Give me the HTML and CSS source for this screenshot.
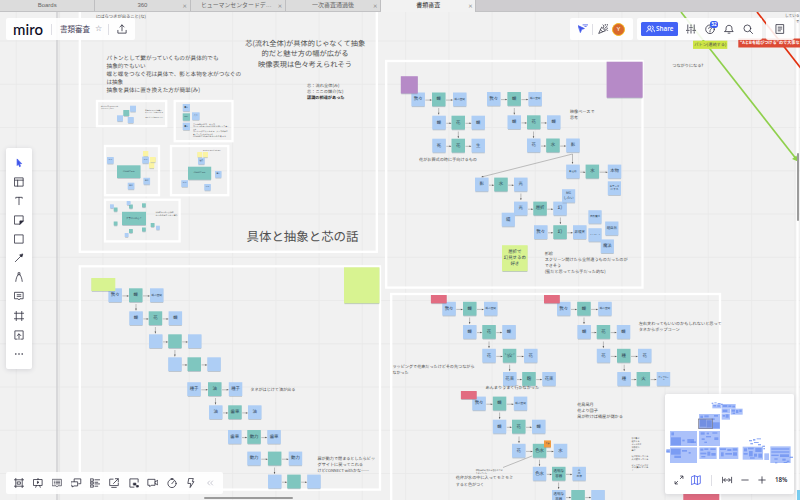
FILE: index.html
```html
<!DOCTYPE html>
<html lang="ja">
<head>
<meta charset="utf-8">
<title>書類審査</title>
<link rel="stylesheet" href="styles.css">
</head>
<body>
<div class="app">
  <nav class="tabs">
    <div class="tab">Boards</div>
    <div class="tab">360<span class="close">×</span></div>
    <div class="tab tab-long">ヒューマンセンタードデ…<span class="close">×</span></div>
    <div class="tab">一次審査通過後<span class="close">×</span></div>
    <div class="tab tab-active">書類審査<span class="close">×</span></div>
    <div class="tab-rest"></div>
  </nav>
  <main class="stage">
    <svg class="board" id="board" viewBox="0 12 800 488"></svg>

    <header class="panel panel-board">
      <span class="logo">miro</span>
      <i class="rule"></i>
      <span class="board-name">書類審査</span>
      <span class="star">☆</span>
      <i class="rule"></i>
      <svg class="icon upload" viewBox="0 0 12 12"><path d="M6 8V1.600M3.700 3.800 6 1.500l2.300 2.300M1.500 7.500v3h9v-3"/></svg>
    </header>

    <div class="panel panel-user">
      <svg class="icon cursor-name" viewBox="0 0 12 12"><path class="solid" d="M1 2.500l6.500 3-3 .9L3.300 9.500z"/><path d="M6 1.500h5M8 3.200h1.500"/></svg>
      <i class="rule"></i>
      <svg class="icon" viewBox="0 0 12 12"><path d="M1.500 10.500 4.500 4l3.700 3.600zM3.500 7l2 2M6.500 4.500C7.500 3.500 7 2 6 1.500M7.800 5.500 10.500 3M8.500 7c1-.5 2-.2 2.500.5M8.500 1v1M10.700 1v.6M10.600 5v.6"/></svg>
      <span class="avatar">Y</span>
    </div>

    <div class="panel panel-actions">
      <button class="share"><svg viewBox="0 0 12 10"><path d="M1 9C1 6.800 2.300 6 4.200 6s3.300.8 3.300 3M4.200 1.200a1.900 1.900 0 1 1 0 3.900 1.900 1.900 0 0 1 0-3.900M7.300 1.200a1.900 1.900 0 1 1 0 3.900M8.500 6c1.700 0 2.700 1 2.700 3"/></svg>Share</button>
      <svg class="icon" viewBox="0 0 12 12"><path d="M2.500 1.500v5M2.500 9v1.500M1 7.500h3M6 1.500V3M6 6v4.500M4.600 4.500h2.800M9.500 1.500v5M9.500 9v1.500M8 7.500h3"/></svg>
      <span class="help"><svg class="icon" viewBox="0 0 12 12"><circle cx="6" cy="6.300" r="4.700"/><path d="M4.500 5.300c0-2 3-1.800 3 0 0 1-1.500 1.100-1.500 2.200M6 8.600v.7"/></svg><b class="count">52</b></span>
      <svg class="icon" viewBox="0 0 12 12"><path d="M1.500 8.800h9L9.200 7V5C9.200 1 2.800 1 2.800 5v2zM5 10.500h2"/></svg>
      <svg class="icon" viewBox="0 0 12 12"><circle cx="5.300" cy="5.300" r="3.700"/><path d="m8 8 3 3"/></svg>
    </div>

    <div class="panel panel-notes">
      <svg class="icon" viewBox="0 0 12 12"><path d="M2 1.200h8v9.600H2zM4 4h4M4 6h4M4 8h2.500"/></svg>
    </div>

    <aside class="panel tools">
      <svg class="icon blue" viewBox="0 0 12 12"><path class="solid" d="M4 2v6.700l1.500-1.500 1.100 2.800 1-.5-1.100-2.600 2-.2z"/></svg>
      <svg class="icon" viewBox="0 0 12 12"><path d="M1.500 1.500h9v9h-9zM1.500 4h9M4.500 4v6.500"/></svg>
      <svg class="icon" viewBox="0 0 12 12"><path d="M2.500 3V2h7v1M6 2v8"/></svg>
      <svg class="icon" viewBox="0 0 12 12"><path d="M1.500 1.500h9v5.500l-3.500 3.500H1.500z"/><path class="solid" d="M10.500 7H7v3.500z"/></svg>
      <svg class="icon" viewBox="0 0 12 12"><path d="M1.500 1.500h9v9h-9z"/></svg>
      <svg class="icon" viewBox="0 0 12 12"><path d="M2 10 9 3"/><path class="solid" d="m10 2-.9 3-2.100-2.100z"/></svg>
      <svg class="icon" viewBox="0 0 12 12"><path d="M2.500 10.800C2.800 8 3.500 5.500 5 3.500h2c1.500 2 2.200 4.500 2.500 7.300M5 3.500V1.300h2v2.200"/></svg>
      <svg class="icon" viewBox="0 0 12 12"><path d="M1.500 2h9v7H7l-1 1.300L5 9H1.500zM4 4.600h4M4 6.400h4"/></svg>
      <svg class="icon" viewBox="0 0 12 12"><path d="M3 1v10M9 1v10M1 3h10M1 9h10"/></svg>
      <svg class="icon" viewBox="0 0 12 12"><path d="M4 10.500H1.500v-9h9v9H8M6 10.800V5M4 6.700l2-2 2 2"/></svg>
      <svg class="icon" viewBox="0 0 12 12"><circle class="dot" cx="2.500" cy="6" r=".9"/><circle class="dot" cx="6" cy="6" r=".9"/><circle class="dot" cx="9.500" cy="6" r=".9"/></svg>
    </aside>

    <footer class="panel dock">
      <svg class="icon" viewBox="0 0 12 12"><path d="M2.500 1v10M9.500 1v10M1 2.500h10M1 9.500h10M4.500 4.800h3v2.500h-3z"/></svg>
      <svg class="icon" viewBox="0 0 12 12"><path d="M1.500 2.200h9v6.500h-9zM6 .8v1.400M4.300 8.700l-.8 2M7.700 8.700l.8 2"/><path class="solid" d="M5.400 4.500v2l1.300-1z"/></svg>
      <svg class="icon thin" viewBox="0 0 12 12"><path d="M1.200 2h9.600v7H7l-1 1.300L5 9H1.200zM3 4h.6M5 4h4M3 5.500h.6M5 5.500h4M3 7h.6M5 7h4"/></svg>
      <svg class="icon" viewBox="0 0 12 12"><path d="M4 4.500V1.500h7.200v5.300H9M.8 4.700h7v4.500H3.500L2.300 10.500V9.200H.8z"/></svg>
      <svg class="icon" viewBox="0 0 12 12"><path d="M1.200 1.500h3v2.500h-3zM1.200 5h3v2h-3zM1.200 8.200h3v2.300h-3zM6 2.500h5M6 5.200h3M6 7h5M6 9.500h3"/></svg>
      <svg class="icon" viewBox="0 0 12 12"><path d="M5 1.800H1.300v7h9.400V6M3.500 10.800h5M5.500 6.500l5-5M7.500 1.300h3.200v3.200"/></svg>
      <svg class="icon" viewBox="0 0 12 12"><path d="M10.500 5V1.500h-9v9H6"/><path class="solid" d="M5.700 6.200H8v2H5.700zM9 8.700h1.700v1.700H9z"/></svg>
      <svg class="icon" viewBox="0 0 12 12"><path d="M.8 2h7.400v6.500H4L2.500 10V8.500H.8zM8.200 4.800 11.200 3v5l-3-1.500"/></svg>
      <svg class="icon" viewBox="0 0 12 12"><circle cx="6" cy="6.500" r="4.500"/><path d="M5.800 6.800 8.200 4M4.800.8h2.400M6 .8V2"/></svg>
      <svg class="icon" viewBox="0 0 12 12"><path d="M4 1h4.500L7.500 4.500H9.200L5 11l.7-4.500H3z"/></svg>
      <svg class="icon faint" viewBox="0 0 12 12"><path d="M5.500 3.800 3.400 6l2.100 2.200M8.800 3.800 6.700 6l2.100 2.200"/></svg>
    </footer>

    <section class="map">
      <svg class="map-view" id="map" viewBox="285 27 387 225"></svg>
      <div class="map-bar">
        <svg class="icon" viewBox="0 0 12 12"><path d="M7.500 4.500 10 2M7.700 1.700h2.600v2.600M4.500 7.500 2 10M1.700 7.700v2.600h2.600"/></svg>
        <svg class="icon blue" viewBox="0 0 12 12"><path d="M1.300 2.500 4.400 1.300l3.200 1.200 3.100-1.200v8.400l-3.100 1.200-3.200-1.200-3.100 1.200zM4.400 1.300v8.400M7.600 2.500v8.400"/></svg>
        <i class="rule"></i>
        <svg class="icon" viewBox="0 0 12 12"><path d="M1 3v6M11 3v6M2.500 6h7M4 4.300 2.400 6 4 7.700M8 4.300 9.600 6 8 7.700"/></svg>
        <svg class="icon" viewBox="0 0 12 12"><path d="M2.500 6h7"/></svg>
        <svg class="icon" viewBox="0 0 12 12"><path d="M2.500 6h7M6 2.500v7"/></svg>
        <span class="zoom">18%</span>
      </div>
    </section>

    <div class="bar-h"></div>
    <div class="bar-v"></div>
  </main>
</div>
<script src="board.js"></script>
</body>
</html>
```

FILE: styles.css
```css
* { box-sizing: border-box; }
body {
  margin: 0;
  font-family: "Noto Sans", "Noto Sans CJK JP", sans-serif;
  color: #2b2b3a;
}
.app { width: 800px; height: 500px; display: flex; flex-direction: column; overflow: hidden; }

.tabs { display: flex; height: 12px; flex: none; background: #cfcdd0; border-bottom: 1px solid #c2c2c4; }
.tab {
  position: relative;
  width: 95.300px;
  background: #dcdcdc;
  border-right: 1px solid #bfbfc1;
  font: 6px/11px "Liberation Sans", "Noto Sans CJK JP", sans-serif;
  text-align: center;
  color: #666;
  white-space: nowrap;
}
.tab-long { padding-right: 3px; font-size: 5.900px; }
.tab-active { height: 12px; background: #f2f2f2; color: #333; }
.close { position: absolute; right: 3px; top: 0; font: 300 7.500px/11px Roboto, sans-serif; color: #888; }
.tab-rest { flex: 1; }

.stage { position: relative; flex: 1; background: #f1f1f1; }
.board { display: block; width: 800px; height: 488px; }
.board text { font-family: "Noto Sans CJK JP", sans-serif; fill: #505050; text-rendering: geometricPrecision; }
.board .bold { font-weight: 700; fill: #222; }
.board .white { font-weight: 700; fill: #fff; }
.board .ink { fill: #2c3e52; font-weight: 400; }
.grid-line { stroke: #e8e8e9; stroke-width: .8; }
.frame { fill: none; stroke: #fff; stroke-width: 2.300; }
.link { fill: none; stroke: #858585; stroke-width: .5; }
.tip { fill: #555; }
.shade { fill: #8494a0; opacity: .5; }

.panel {
  position: absolute;
  display: flex;
  align-items: center;
  background: rgba(255, 255, 255, .88);
  border-radius: 2px;
}
.icon { width: 12px; height: 12px; padding: .5px; flex: none; fill: none; stroke: #2a2a3a; stroke-width: .85; stroke-linecap: round; stroke-linejoin: round; }
.icon .solid, .icon .dot { fill: #2a2a3a; }
.icon .dot { stroke: none; }
.icon.thin { stroke-width: .7; }
.icon.blue, .icon.cursor-name { stroke: #3d54ea; }
.icon.blue .solid, .cursor-name .solid { fill: #3d54ea; }
.icon.faint { stroke: #aaaab8; stroke-width: .7; }
.rule { width: 1px; height: 11px; background: #dedee4; flex: none; }

.panel-board { left: 6px; top: 6px; width: 129px; height: 22px; padding-left: 7px; }
.logo { width: 38px; padding-bottom: 1px; font: 500 15px/20px Lato, sans-serif; letter-spacing: .1px; color: #0a0a23; }
.board-name { margin-left: 8px; width: 35px; font-size: 7.500px; line-height: 12px; color: #4a4660; }
.star { width: 13px; font: 8px/12px "DejaVu Sans", sans-serif; color: #77758a; }
.upload { margin-left: 7px; }

.panel-user { left: 570px; top: 6px; width: 63px; height: 22px; padding-left: 7px; }
.panel-user .rule { margin: 0 4px 0 3px; }
.avatar { width: 13px; height: 13px; margin-left: 3px; border: 1px solid #f5b81f; border-radius: 50%; background: #d9692b; color: #fff; font-size: 6px; line-height: 11px; text-align: center; }

.panel-actions { left: 637px; top: 6px; width: 125px; height: 22px; padding-left: 4px; gap: 7px; }
.share { display: flex; align-items: center; justify-content: center; gap: 1px; width: 37px; height: 14.500px; margin-right: 0; padding: 0; border: 0; border-radius: 1.500px; background: #4262f5; color: #fff; font: 600 6.300px/14px "Open Sans", sans-serif; }
.share svg { width: 9.500px; height: 8px; fill: none; stroke: #fff; stroke-width: 1.200; }
.help { position: relative; display: flex; }
.count { position: absolute; left: 6px; top: -2px; width: 8px; height: 6.500px; border-radius: 3px; background: #3859f0; color: #fff; font-size: 4.500px; line-height: 6.500px; text-align: center; }
.panel-notes { left: 766px; top: 6px; width: 28px; height: 22px; justify-content: center; }

.tools { left: 6px; top: 136px; width: 26px; height: 221px; padding: 8.500px 0 9px; flex-direction: column; justify-content: space-between; background: #fff; box-shadow: 0 1px 5px rgba(60, 60, 90, .16); }
.dock { left: 6px; top: 460px; width: 217px; height: 22px; padding: 0 7px; justify-content: space-between; }

.map { position: absolute; left: 665px; top: 382px; width: 129px; height: 100px; display: flex; flex-direction: column; background: #fff; border-radius: 2px; box-shadow: 0 1px 5px rgba(60, 60, 90, .16); }
.map-view { display: block; width: 129px; height: 75px; }
.map-bar { display: flex; align-items: center; height: 25px; padding: 0 8px 3px 8px; }
.map-bar .icon:nth-child(2) { margin-left: 5px; }
.map-bar .rule { margin: 0 9px; }
.map-bar .icon:nth-child(5) { margin-left: 6px; }
.map-bar .icon:nth-child(6) { margin-left: 5px; }
.zoom { margin-left: 7px; font: 600 6.200px/10px "Open Sans", sans-serif; color: #20202e; }
.area { fill: #abc1fa; }
.spot { fill: #6b8ff0; opacity: .75; }
.view { fill: rgba(80, 100, 170, .22); stroke: #778; stroke-width: 2; }

.bar-h { position: absolute; left: 203.500px; top: 484.500px; width: 89px; height: 2.500px; border-radius: 2px; background: #9b9b9b; }
.bar-v { position: absolute; left: 796.500px; top: 141px; width: 2.500px; height: 68px; border-radius: 2px; background: #9b9b9b; }
```

FILE: board.js
```js
const NS = "http://www.w3.org/2000/svg";
const board = document.getElementById("board");
const C = { b: "#aecef5", t: "#7fc6bf", g: "#d8f391", p: "#b68ac7", r: "#e26c81", y: "#fbf4a3", o: "#f29a3e" };

function add(parent, tag, attrs, content) {
  const el = document.createElementNS(NS, tag);
  for (const k in attrs) el.setAttribute(k, attrs[k]);
  if (content) el.textContent = content;
  parent.appendChild(el);
  return el;
}

// One line of text, vertically centred on cy; w fixes its drawn width.
function label(x, cy, size, str, w, cls, anchor) {
  const a = { x, y: cy + size * 0.36, "font-size": size, class: cls || "" };
  if (anchor) a["text-anchor"] = anchor;
  if (w) { a.textLength = w; a.lengthAdjust = "spacingAndGlyphs"; }
  add(board, "text", a, str);
}

function note(x, y, color, str, w = 13.5, h = 13.8) {
  add(board, "rect", { x: x + 0.5, y: y + 0.8, width: w - 0.8, height: h, class: "shade" });
  add(board, "rect", { x, y, width: w, height: h, fill: C[color] });
  if (!str) return;
  const lines = str.split("/");
  const longest = Math.max(...lines.map(l => l.length));
  const size = Math.min(4.4, (w - 3) / longest);
  const step = w > 20 ? 5.8 : size * 1.25;
  lines.forEach((l, i) =>
    label(x + w / 2, y + h / 2 - 0.6 + (i - (lines.length - 1) / 2) * step, size, l, 0, "ink", "middle"));
}

function arrow(x1, y1, x2, y2) {
  add(board, "path", { d: `M${x1} ${y1}L${x2} ${y2}`, class: "link" });
  const a = Math.atan2(y2 - y1, x2 - x1) * 180 / Math.PI;
  add(board, "path", { d: "M0 0L-1.8 -.75V.75z", class: "tip", transform: `translate(${x2} ${y2}) rotate(${a})` });
}

// Three linked notes: blue, teal, blue.
function chain(y, xs, texts) {
  xs.forEach((x, i) => note(x, y, i === 1 ? "t" : "b", texts[i]));
  arrow(xs[0] + 14, y + 7.6, xs[1] - 0.3, y + 7.6);
  arrow(xs[1] + 14, y + 7.6, xs[2] - 0.3, y + 7.6);
}

function frame(x, y, w, h) {
  add(board, "rect", { x, y, width: w, height: h, class: "frame" });
}

function box(x, y, w, h, fill) {
  add(board, "rect", { x, y, width: w, height: h, fill });
}

for (let x = 16.3; x < 800; x += 43.25) add(board, "path", { d: `M${x} 12V500`, class: "grid-line" });
for (let y = 41; y < 500; y += 43.25) add(board, "path", { d: `M0 ${y}H800`, class: "grid-line" });
box(56.2, 12, 1.6, 488, "#d2d2d4");
box(58.6, 12, 0.7, 488, "#dededf");

frame(79.8, -10, 297, 261.8);
frame(79.8, 266.3, 300.2, 223.3);
frame(386.2, 61, 256.3, 226.6);
frame(391.2, 294, 328.8, 240);
frame(797.5, -20, 40, 560);

// Frame: concrete and abstract
label(96, 16, 4.4, "にばらつきが出ること(な)", 50);
[["パトンとして繋がっていくものが具体的でも", 112], ["抽象的でもいい", 39], ["蝶と蝶をつなぐ花は具体で、影と本物を水がつなぐの", 134.5],
 ["は抽象", 16.5], ["抽象を具体に置き換えた方が簡単(み)", 93.5]].forEach((t, i) => label(106.6, 57.5 + i * 8.1, 5.7, t[0], t[1]));
label(305.2, 43.4, 7.3, "芯(流れ全体)が具体的じゃなくて抽象", 120, "", "middle");
label(305, 53.7, 7.3, "的だと魅せ方の幅が広がる", 87, "", "middle");
label(305, 64, 7.3, "映像表現は色々考えられそう", 94, "", "middle");
label(307, 85.3, 4.2, "芯：流れ全体(み)", 32.5);
label(307, 91.5, 4.2, "芯：ここの媒介(な)", 36.5);
label(307, 97.6, 4.2, "認識の相違があった", 37.5, "bold");
label(246.5, 237, 12.4, "具体と抽象と芯の話", 112);

frame(97, 101, 69.2, 25.2);
note(130, 105.7, "b", "", 6, 6); note(123.3, 110, "t", "", 6, 6); note(117, 115.3, "b", "", 6, 6); note(127.7, 117, "b", "", 6, 6);
label(101, 106.8, 1.5, "蝶と花の間にあるものは", 17); label(101, 108.8, 1.5, "何なのかを考えたい", 13);
label(145, 110.5, 1.5, "具体的なものが抽象に", 17); label(145, 112.6, 1.5, "なっていく流れを作る", 18); label(145, 117, 1.5, "つながりがあるといい", 18);
frame(174.7, 101, 57.8, 40.2);
note(182.7, 104, "b", "書く", 7.3, 7.3); note(182.7, 113.3, "t", "つなぐ", 7.3, 7.3); note(192, 112.3, "b", "書く", 7.6, 7.6); note(182.7, 122.7, "b", "書く", 7.3, 7.3);
[["これは我々の影、本人影", 22], ["影というのはつながりのある物として書く", 36], ["人は", 3], ["影という形で表しながら、人と影の間を", 35], ["書くことでつながるように", 20], ["CONNECT の間にあるものを考える", 33]]
  .forEach((t, i) => label(193, 124.4 + i * 2.4, 1.7, t[0], t[1]));

frame(105, 146, 54, 49.2);
note(107, 157, "b", "つなぐ", 6.7, 6.7); note(143, 151, "y", "", 5.3, 5.3); note(149, 162.3, "y", "", 5.3, 6); note(150, 157, "y", "", 5.7, 5.3);
note(142.2, 156.7, "b", "つなぐ", 6.7, 6.7); note(117, 165.3, "t", "CONNECT with", 23.5, 12.7);
note(143.4, 177.8, "b", "蝶と", 6.7, 6.7); note(127.7, 182.7, "b", "蝶と", 6.7, 6.7);
frame(171, 146, 57.3, 49.2);
label(203, 150.2, 1.5, "あなたとつながるために", 18);
note(197.3, 152, "y", "", 5, 5.3); note(203, 152, "y", "", 5, 5.3); note(198, 157.7, "b", "魅力", 6.7, 6.7);
note(188, 166.7, "t", "CONNECT with", 23.2, 13); note(215, 171, "b", "蝶と", 6.5, 6.7); note(181.3, 180.2, "b", "つなぐ", 6.7, 6.7); note(204.3, 184, "b", "水の力", 6.5, 6.5);
frame(105, 199.7, 74.6, 41.7);
[[113.7, 207.5], [129, 204.5], [142, 203.3], [113.7, 221.5], [129, 229], [142, 227.5], [150.7, 223]].forEach(p => note(p[0], p[1], "t", "", 3.8, 4));
[[110, 204.3], [126.7, 201], [124.7, 233], [156, 225.7]].forEach(p => note(p[0], p[1], "b", "", 3.8, 4));
note(122, 211.8, "t", "", 24, 13.3);
label(134, 218, 2.2, "大事なのは心？", 0, "ink", "middle");
label(155.5, 212.6, 1.7, "抽象的なものと具体的", 18); label(155.5, 215.2, 1.7, "なものの間をつなぐ媒介", 22);

// Frame: butterfly chain, lower left
chain(288.3, [108.4, 129, 150], ["我々", "蝶", "蝶の空間"]);
note(91.3, 278, "g", "", 24, 13);
chain(311.3, [129.3, 148.7, 168.6], ["蝶", "花", "蝶"]);
chain(334.3, [149, 168.2, 188], ["", "", ""]);
chain(357.3, [168.2, 187.5, 207.3], ["", "", ""]);
chain(382.2, [187.3, 208, 228.8], ["種子", "油", "種子"]);
chain(405.3, [209, 228.2, 248], ["油", "歯車", "油"]);
chain(430, [228, 247.3, 267.3], ["歯車", "動力", "歯車"]);
chain(451.6, [247.3, 267.9, 288.7], ["動力", "", "動力"]);
chain(474.6, [268, 287.2, 307.2], ["", "", ""]);
[[136, 304], [155.4, 327], [174.9, 350], [215.5, 398], [274.5, 467.5]].forEach(p => arrow(p[0], p[1], p[0], p[1] + 6.4));
note(344, 267.3, "g", "", 35.5, 36);
label(250.3, 389.7, 4.2, "タネがはじけて油が出る", 45);
label(317.5, 458.3, 4.2, "扉が動力で閉まるとしたらビッ", 57.5);
label(317.5, 464.4, 4.2, "グサイトに戻ってこれる", 45.5);
label(317.5, 470.4, 4.2, "けどCONNECT withかな……", 51.5);

// Frame: shadow and water
note(606.6, 61.7, "p", "", 36, 36);
chain(92.5, [411.4, 432, 453], ["我々", "蝶", "蝶の空間"]);
note(400.8, 76.2, "p", "", 17, 17.3);
chain(115.7, [432.3, 451.5, 471.5], ["蝶", "花", "蝶"]);
chain(138.7, [432.3, 451.5, 471.5], ["死", "花", "生"]);
chain(92, [487, 507.4, 528.4], ["我々", "蝶", "蝶の空間"]);
chain(115.3, [507.5, 527, 547], ["蝶", "花", "蝶"]);
chain(138.5, [527, 546.2, 566.2], ["花", "水", "影"]);
chain(164.6, [566.2, 585.6, 607.8], ["影(虚物)", "水", "本物"]);
chain(177.6, [475, 494.2, 514], ["影", "水", "光"]);
chain(201.6, [514, 533.3, 553.3], ["光", "屈折", "幻"]);
chain(225.2, [534, 553.3, 573], ["我々", "幻", "非現実"]);
note(562, 189.2, "b", "MG/したい", 13.2, 13.4);
note(501.7, 212.7, "b", "鏡", 13.2);
note(607.8, 181.3, "b", "モチーフ/にする", 13.2);
note(588.4, 210.2, "b", "自然魔法", 13.2, 13.4);
note(588.4, 228.2, "b", "トリックアート", 13.2, 13.4);
note(605.2, 221.5, "b", "超自然", 13.2);
note(600.7, 239.4, "b", "魔法", 13.2);
note(502, 245.2, "g", "屈折で/幻見せるの/好き", 25.6, 26);
[[438.7, 108], [458.3, 131.5], [514.3, 108], [533.5, 131.5], [520.9, 193.5], [560.4, 217.5]].forEach(p => arrow(p[0], p[1], p[0], p[1] + 6.5));
arrow(572.5, 154, 572.5, 163.7);
arrow(572.5, 154, 481.5, 177);
label(419, 159.6, 4.2, "花がお葬式の時に手向けるもの", 58);
label(570, 111, 4.2, "映像ベースで", 24.5);
label(570, 117, 4.2, "思考", 8);
label(544.7, 253.8, 4.2, "影絵", 8.3);
label(544.7, 259.8, 4.2, "スクリーン開けたら全然違うものだったのが", 83);
label(544.7, 265.8, 4.2, "できそう", 16.3);
label(544.7, 271.8, 4.2, "(蜜だと思ってたら手だった的な)", 61);

// Frame: flower variations
chain(301.8, [442.3, 463, 484], ["我々", "蝶", "蝶の空間"]);
chain(325, [463, 482.3, 502.3], ["蝶", "花", "蝶"]);
chain(348.8, [482.3, 502.8, 524], ["花", "ラッピング/(包装)", "花"]);
chain(372, [503, 522.2, 542.3], ["花束", "麹", "花束"]);
chain(301.8, [557, 577.2, 598.2], ["我々", "蝶", "蝶の空間"]);
chain(325, [577.4, 596.7, 616.8], ["蝶", "花", "蝶"]);
chain(348.8, [596.8, 617, 638], ["花", "種", "花"]);
chain(372, [617.3, 636.6, 656.7], ["種", "火", "ポップコー/ン"]);
chain(396.6, [472.3, 492.8, 513.8], ["我々", "蝶", "蝶の空間"]);
chain(419.7, [492.8, 512, 532], ["蝶", "花", "蝶"]);
chain(443.8, [512, 532.8, 553.8], ["花", "色水", "水"]);
chain(466.8, [532.8, 552, 572.4], ["色水", "透明な/容器", ""]);
["人", "の", "血液"].forEach((t, i) => label(579.2, 469.7 + i * 3.3, 2.7, t, 0, "ink", "middle"));
chain(490, [552, 571.3, 591.3], ["透明な/容器", "", ""]);
note(430.9, 295, "r", "", 15.8, 8.3); note(544, 295, "r", "", 15.8, 8.3); note(460.9, 391, "r", "", 15.8, 8.2);
note(544, 440.4, "o", "重要", 7, 7);
[[469.6, 317.5], [489, 341.5], [509.6, 364.7], [584, 317.5], [603.4, 341.5], [624.2, 364.7], [499.6, 412.5], [519, 436.5], [539.5, 459.7], [558.6, 482.5]]
  .forEach(p => arrow(p[0], p[1], p[0], p[1] + 6.4));
add(board, "path", { d: "M532 456L503 467.5", class: "link" });
label(392.5, 366.7, 4.2, "ラッピングで花束だったけどその先つながら", 82);
label(392.5, 372.7, 4.2, "なかった", 16);
label(485.6, 387.7, 4.2, "あんまりうまく行かなかった", 53.5);
label(475.8, 469.8, 2, "植物園の研究から色水がモミ", 27);
label(475.8, 472.8, 2, "モミしていた", 11);
label(455.7, 477.9, 4.2, "花弁が水の中に入ってモミモミ", 57.5);
label(455.7, 484, 4.2, "すると色がつく", 28.5);
label(638.7, 323, 4.2, "左右変わってもいいのかもしれないと思って", 83);
label(638.7, 329, 4.2, "タネからポップコーン", 41);
label(577.3, 404, 4.2, "花鳥風月", 16.3);
label(577.3, 410, 4.2, "花より団子", 20.5);
label(577.3, 416, 4.2, "風が吹けば桶屋が儲かる", 45.5);
[["水は影に", 8], ["魔法する", 8], ["メールがき", 10], ["家族取り", 8], ["書け", 4], ["", 0], ["何で文をしている", 17], ["人は繋がっている", 17], ["", 0], ["ビッグサイトはど", 17], ["ど人集めている", 17], ["？", 2]]
  .forEach((t, i) => t[0] && label(631.5, 438.2 + i * 2.95, 2.1, t[0], t[1]));

// Loose items at the right edge
add(board, "path", { d: "M681 12L797 160", stroke: "#8fd04c", "stroke-width": 1.7 });
add(board, "path", { d: "M798 161.5l-1.5-6-4.5 3.5z", fill: "#8fd04c" });
add(board, "path", { d: "M757 12L801 68.5", stroke: "#e2300f", "stroke-width": 1.7 });
box(693, 40.7, 34.3, 8.2, "#cde545");
label(694.3, 44.8, 4.2, "パトン(連続する)", 32);
box(738.3, 38.5, 62, 9, "#dc4a35");
label(740, 42.8, 4.4, "“AとBを結びつける”ので大事な", 59.5, "white");
label(672.3, 65, 4.2, "つながりになる?", 31);
label(785, 15, 4.2, "している", 14.5);
label(795.6, 21, 4.2, "で", 4);
box(683.3, 494, 36, 8, "#e26c81");
box(797, 490, 4, 10, "#79cdf0");

// Overview map
const map = document.getElementById("map");
const rect = (x, y, width, height, cls) => add(map, "rect", { x, y, width, height, class: cls });
[[427, 58, 27, 12], [455, 57, 42, 14], [455, 71, 25, 14], [482, 71, 36, 18], [455, 86, 25, 18], [387, 87, 63, 45], [300, 138, 81, 45], [387, 138, 63, 45],
 [300, 187, 81, 47], [388, 187, 52, 35], [447, 187, 58, 35], [518, 185, 61, 39], [583, 205, 14, 20], [601, 184, 61, 50], [289, 192, 12, 12]]
  .forEach(a => rect(...a, "area"));
[[425, 53, 5, 4], [433, 52, 7, 3], [443, 54, 9, 4], [453, 56, 5, 4], [430, 60, 8, 4], [442, 61, 8, 4], [458, 60, 14, 6], [475, 61, 9, 5], [487, 62, 8, 5],
 [458, 74, 14, 7], [485, 74, 10, 6], [498, 75, 7, 9], [508, 74, 7, 7], [488, 83, 7, 4], [458, 90, 7, 5], [467, 88, 9, 10],
 [391, 92, 8, 7], [403, 91, 13, 6], [432, 90, 12, 5], [390, 103, 18, 22], [410, 106, 15, 21], [428, 112, 21, 18], [425, 100, 9, 5],
 [304, 142, 8, 9], [303, 157, 30, 24], [337, 164, 7, 5], [352, 162, 20, 12], [362, 169, 16, 5], [392, 142, 12, 7], [410, 143, 7, 5], [427, 142, 15, 4], [395, 160, 9, 5], [408, 153, 15, 4], [433, 157, 12, 8], [403, 170, 8, 4],
 [303, 191, 29, 18], [336, 195, 15, 5], [313, 212, 20, 7], [356, 201, 6, 5], [289, 196, 10, 5],
 [391, 191, 9, 6], [403, 190, 12, 5], [421, 190, 16, 5], [391, 203, 18, 5], [412, 200, 9, 12], [424, 204, 13, 8], [394, 213, 12, 4],
 [450, 190, 18, 5], [472, 192, 12, 6], [488, 190, 14, 7], [453, 202, 8, 12], [466, 204, 20, 5], [489, 202, 12, 10],
 [522, 190, 9, 9], [534, 188, 17, 5], [556, 189, 19, 12], [521, 204, 12, 5], [537, 198, 11, 16], [552, 206, 9, 9], [565, 206, 11, 12], [540, 217, 14, 4],
 [537, 165, 9, 4], [549, 162, 7, 5], [560, 160, 13, 3], [541, 174, 8, 4], [552, 171, 14, 3], [564, 177, 9, 4], [577, 182, 8, 4], [580, 189, 5, 4],
 [604, 190, 54, 4], [604, 199, 54, 4], [604, 209, 22, 4], [630, 208, 27, 8], [613, 220, 10, 4], [637, 221, 10, 6], [650, 227, 8, 4], [659, 215, 10, 4], [641, 231, 11, 3], [615, 232, 7, 3]]
  .forEach(a => rect(...a, "spot"));
rect(385, 102, 43, 28, "view");
```
